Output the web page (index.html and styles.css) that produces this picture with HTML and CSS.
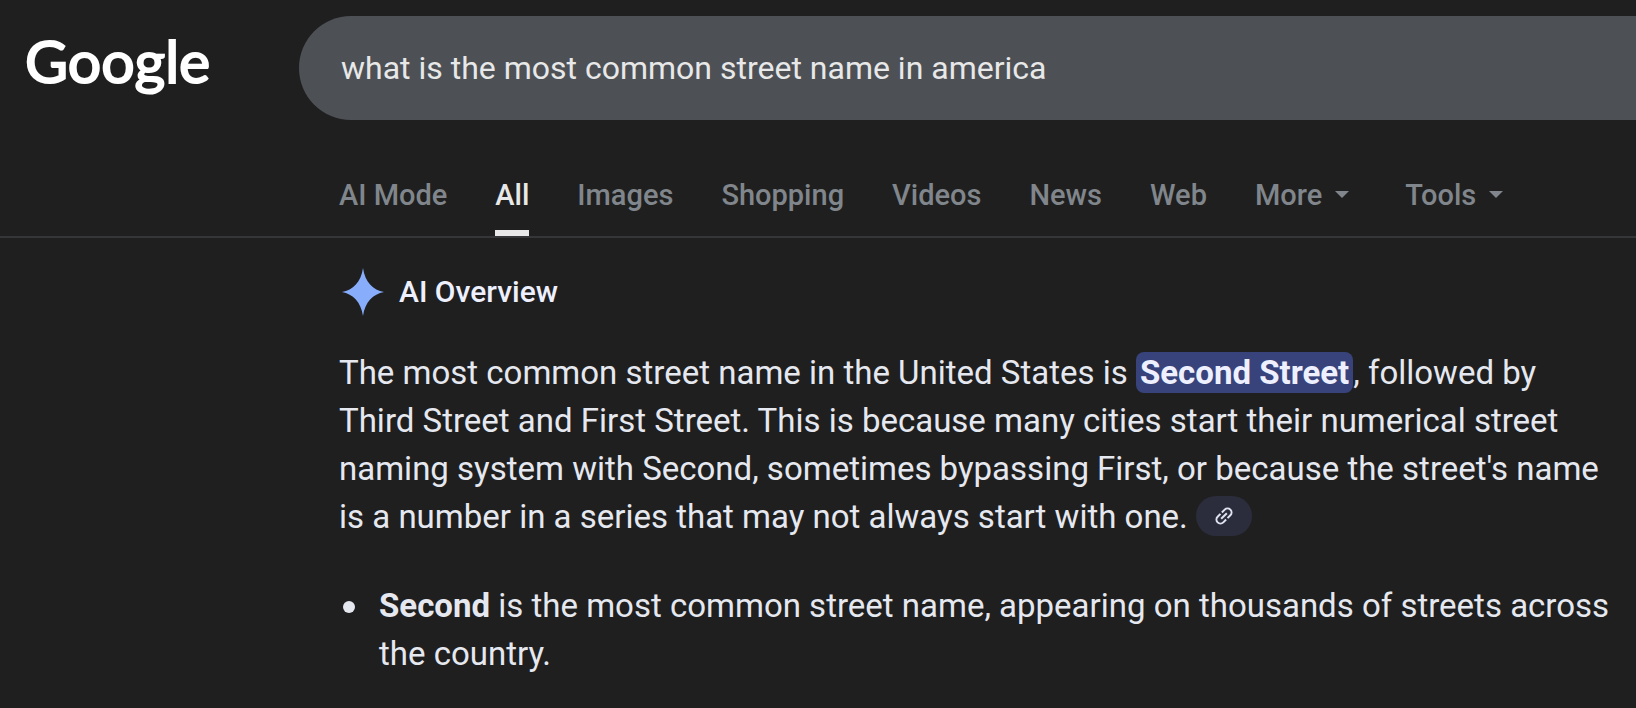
FILE: index.html
```html
<!DOCTYPE html>
<html lang="en">

<head>
    <meta charset="UTF-8">
    <meta name="viewport" content="width=device-width, initial-scale=1.0">
    <title>what is the most common street name in america - Google Search</title>
    <link rel="stylesheet" href="styles.css">
</head>

<body>
    <header class="header">
        <a class="logo" href="#">Google</a>
        <form class="search" role="search">
            <input class="search-input" type="text" name="q" aria-label="Search" value="what is the most common street name in america">
        </form>
    </header>

    <nav class="tabs">
        <a class="tab" href="#">AI Mode</a>
        <a class="tab active" href="#">All</a>
        <a class="tab" href="#">Images</a>
        <a class="tab" href="#">Shopping</a>
        <a class="tab" href="#">Videos</a>
        <a class="tab" href="#">News</a>
        <a class="tab" href="#">Web</a>
        <button class="tab menu" type="button">More <span class="caret"></span></button>
        <button class="tab menu tools" type="button">Tools <span class="caret"></span></button>
    </nav>

    <main class="overview">
        <h1 class="overview-title">
            <svg class="spark" viewBox="0 0 48 48" aria-hidden="true">
                <path d="M24 0C26 14 34 22 45 24C34 26 26 34 24 48C22 34 14 26 3 24C14 22 22 14 24 0Z" fill="#87adfb"/>
            </svg>
            AI Overview
        </h1>

        <p class="answer">
            The most common street name in the United States is <mark class="highlight">Second Street</mark>, followed by
            Third Street and First Street. This is because many cities start their numerical street
            naming system with Second, sometimes bypassing First, or because the street's name
            is a number in a series that may not always start with one.
            <button class="source" type="button" aria-label="View related links">
                <svg class="source-icon" viewBox="0 0 24 24" aria-hidden="true">
                    <g transform="rotate(-45 12 12)" fill="none" stroke="#dfe2f0" stroke-width="2">
                        <path d="M11 8H7a4 4 0 0 0 0 8h4M13 8h4a4 4 0 0 1 0 8h-4M8 12h8"/>
                    </g>
                </svg>
            </button>
        </p>

        <ul class="points">
            <li class="point">
                <div><strong>Second</strong> is the most common street name, appearing on thousands of streets across the country.</div>
            </li>
        </ul>
    </main>
</body>

</html>
```
FILE: styles.css
```css
body {
    margin: 0;
    background-color: #1f1f1f;
    color: #e6e8f0;
    font-family: Roboto, "Liberation Sans", sans-serif;
}

.header {
    display: flex;
    align-items: flex-start;
    padding-top: 16px;
}

.logo {
    box-sizing: border-box;
    width: 299px;
    padding-left: 25px;
    font-family: Lato, sans-serif;
    font-size: 59px;
    font-weight: 400;
    line-height: 90px;
    color: #fff;
    text-decoration: none;
    -webkit-text-stroke: 2px #fff;
}

.search {
    flex: 1;
    background-color: #4d5156;
    border-radius: 52px 0 0 52px;
}

.search-input {
    display: block;
    box-sizing: border-box;
    width: 100%;
    height: 104px;
    padding: 0 42px;
    border: none;
    outline: none;
    background: none;
    color: #e8e8e8;
    font-family: inherit;
    font-size: 32px;
}

.tabs {
    display: flex;
    gap: 48px;
    margin-top: 36px;
    padding-left: 339px;
    border-bottom: 2px solid #353637;
}

.tab {
    box-sizing: border-box;
    height: 80px;
    padding: 0;
    border: none;
    border-bottom: 6px solid transparent;
    background: none;
    color: #80868b;
    font-family: inherit;
    font-size: 29px;
    font-weight: 500;
    line-height: 78px;
    text-decoration: none;
    white-space: nowrap;
}

.active {
    border-bottom-color: #e8e8e8;
    color: #e8e8e8;
}

.menu {
    display: flex;
    align-items: flex-start;
    gap: 13px;
    cursor: pointer;
}

.tools {
    margin-left: 8px;
}

.caret {
    margin-top: 35px;
    border: 7px solid transparent;
    border-top-color: #80868b;
    border-bottom: none;
}

.overview {
    max-width: 1276px;
    padding: 30px 16px 30px 339px;
}

.overview-title {
    display: flex;
    align-items: center;
    gap: 12px;
    margin: 0 0 33px;
    color: #eef0ff;
    font-size: 30px;
    font-weight: 500;
    line-height: 48px;
}

.spark {
    width: 48px;
    height: 48px;
}

.answer {
    margin: 0 0 41px;
    font-size: 33px;
    line-height: 48px;
}

.highlight {
    padding: 1px 4px;
    border-radius: 8px;
    background-color: #37437a;
    color: #eef0ff;
    font-weight: bold;
}

.source {
    display: inline-flex;
    align-items: center;
    justify-content: center;
    width: 56px;
    height: 40px;
    margin: 3px 0 5px;
    padding: 0;
    border: none;
    border-radius: 20px;
    background-color: #2c2d3c;
    vertical-align: top;
    cursor: pointer;
}

.source-icon {
    width: 24px;
    height: 24px;
}

.points {
    margin: 0;
    padding: 0;
    font-size: 33px;
    line-height: 48px;
    list-style: none;
}

.point {
    display: flex;
    gap: 24px;
    padding-left: 4px;
}

.point::before {
    content: "";
    flex: none;
    width: 12px;
    height: 12px;
    margin-top: 19px;
    border-radius: 50%;
    background-color: #e6e8f0;
}
```
